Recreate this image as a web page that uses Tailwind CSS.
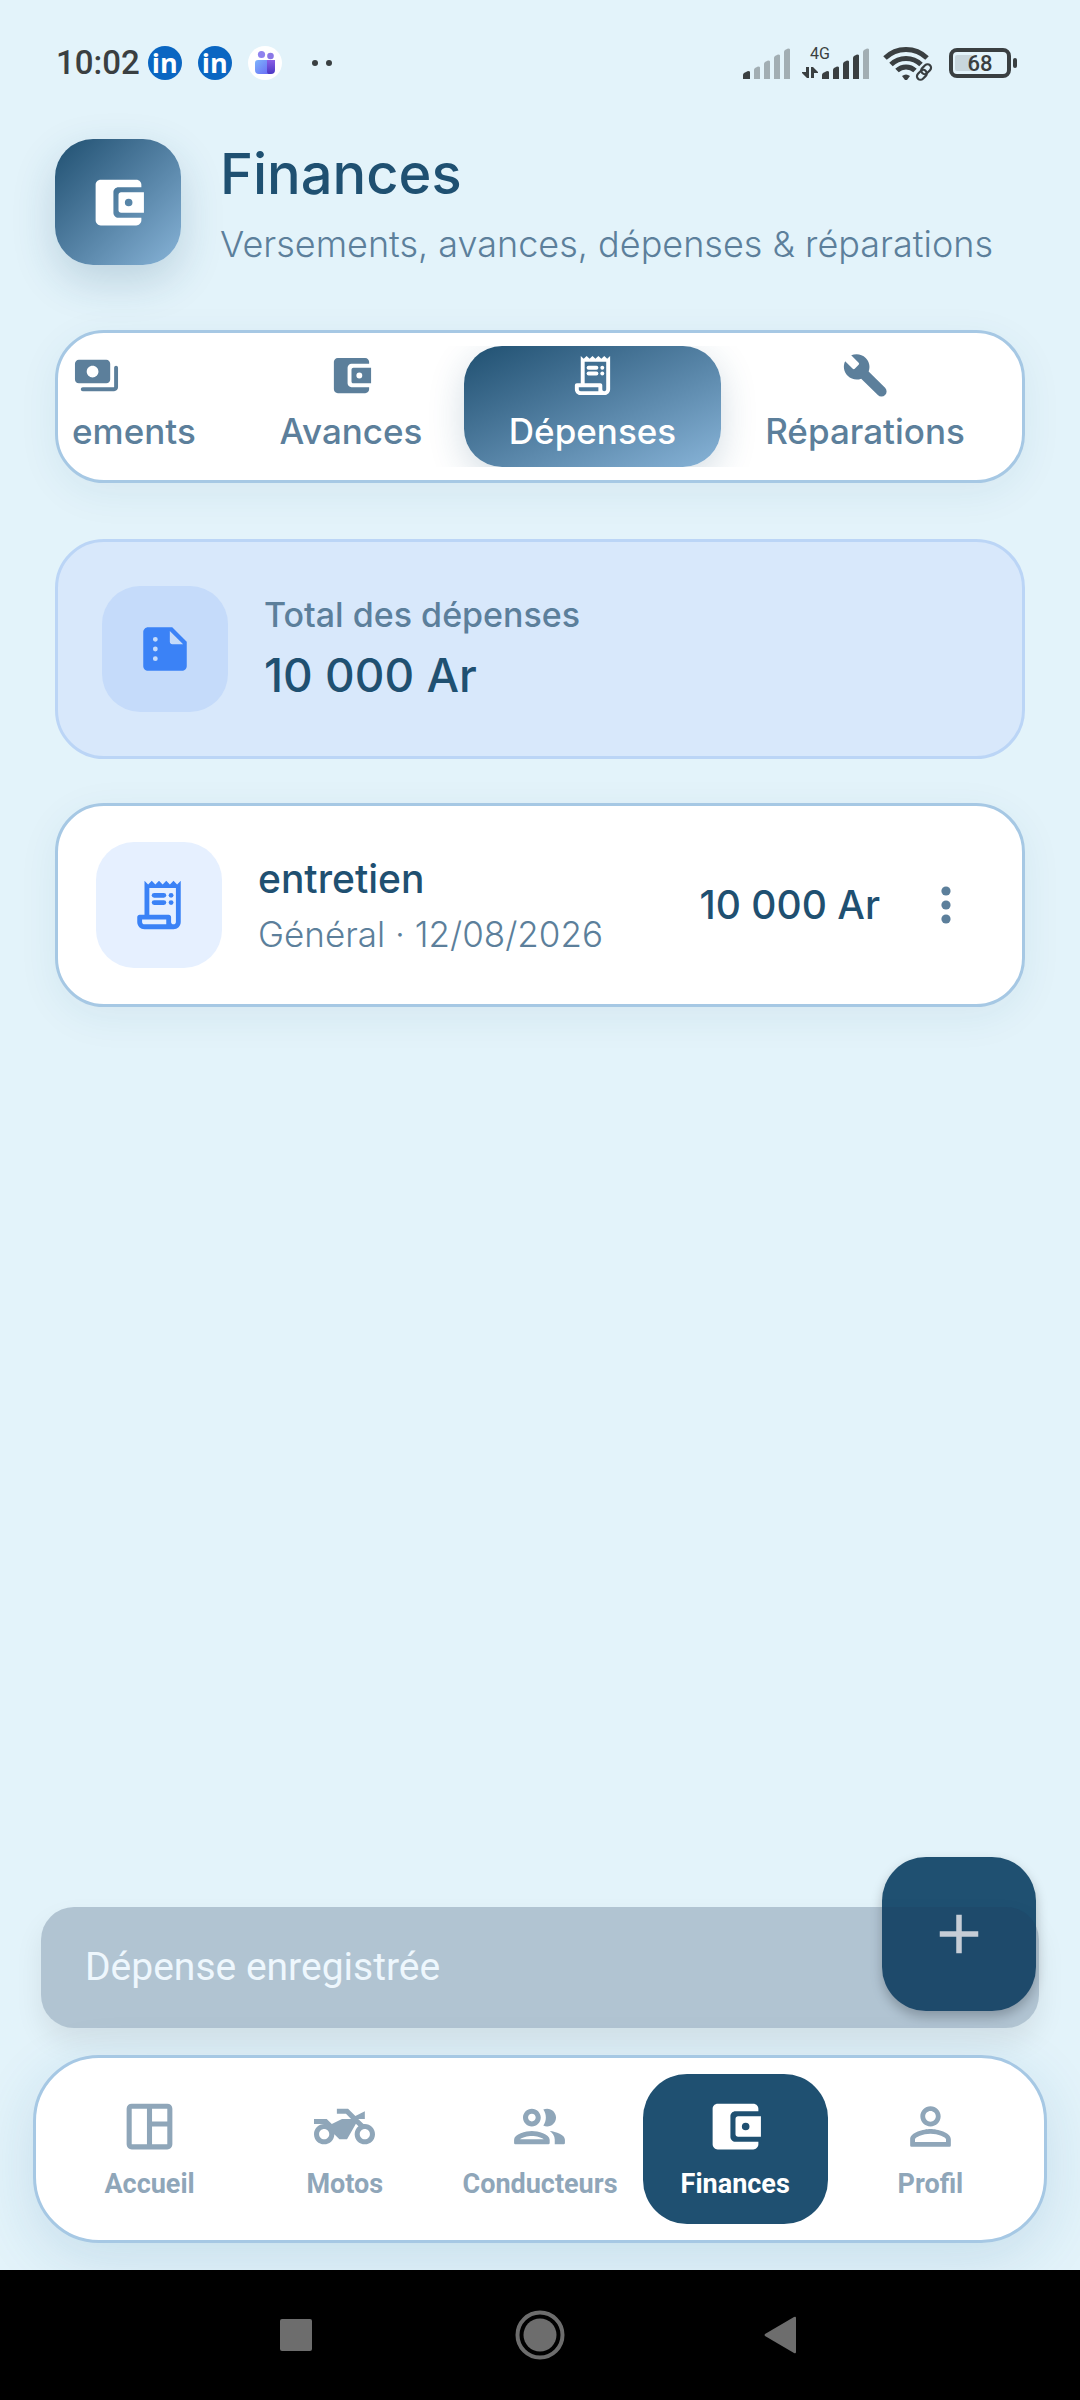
<!DOCTYPE html>
<html lang="fr">
<head>
    <meta charset="UTF-8">
    <meta name="viewport" content="width=device-width, initial-scale=1.0">
    <title>Finances</title>
    <script src="https://cdn.jsdelivr.net/npm/@tailwindcss/browser@4"></script>
</head>
<body class="bg-[#e3f3fa] font-[Inter,'Liberation_Sans',sans-serif]">
    <!-- Shared icons -->
    <svg class="hidden">
        <symbol id="wallet" viewBox="0 0 24 24">
            <path d="M21 18v1c0 1.1-.9 2-2 2H5c-1.11 0-2-.9-2-2V5c0-1.1.89-2 2-2h14c1.1 0 2 .9 2 2v1h-9c-1.11 0-2 .9-2 2v8c0 1.1.89 2 2 2h9z"/>
            <path fill-rule="evenodd" d="M22 8v8h-9c-.55 0-1-.45-1-1V9c0-.55.45-1 1-1h9zm-6 5.5a1.5 1.5 0 1 0 0-3 1.5 1.5 0 0 0 0 3z"/>
        </symbol>
        <symbol id="receipt" viewBox="0 0 24 24">
            <path d="M19.5 3.5 18 2l-1.5 1.5L15 2l-1.5 1.5L12 2l-1.5 1.5L9 2 7.5 3.5 6 2v14H4c-.55 0-1 .45-1 1v2c0 1.66 1.34 3 3 3h12c1.66 0 3-1.34 3-3V2l-1.5 1.5zM15 20H6c-.55 0-1-.45-1-1v-1h10v2zm4-1c0 .55-.45 1-1 1s-1-.45-1-1v-2c0-.55-.45-1-1-1H8V5h11v14z"/>
            <rect x="9" y="7" width="6" height="2" rx="1"/><circle cx="17" cy="8" r="1"/>
            <rect x="9" y="10" width="6" height="2" rx="1"/><circle cx="17" cy="11" r="1"/>
        </symbol>
    </svg>

    <div class="flex min-h-screen flex-col">
        <!-- Status bar -->
        <div class="flex h-[126px] items-center justify-between pl-14 pr-[61px] text-[#3a3f41] font-[Roboto,sans-serif]">
            <div class="flex items-center">
                <span class="mr-2 text-[33px] leading-10 font-medium">10:02</span>
                <span class="mr-4 flex size-[34px] items-center justify-center rounded-full bg-[#0a66c2] pb-[2px] font-['Open_Sans',sans-serif] text-[27px] leading-none font-bold text-white">in</span>
                <span class="mr-4 flex size-[34px] items-center justify-center rounded-full bg-[#0a66c2] pb-[2px] font-['Open_Sans',sans-serif] text-[27px] leading-none font-bold text-white">in</span>
                <svg class="mr-[30px] size-[34px]" viewBox="0 0 34 34">
                    <defs>
                        <linearGradient id="tl" x1="0" y1="0" x2="1" y2="1"><stop stop-color="#7db4fb"/><stop offset="1" stop-color="#6a6cf6"/></linearGradient>
                        <linearGradient id="tr" x1="0" y1="0" x2="0" y2="1"><stop stop-color="#8a5fe6"/><stop offset="1" stop-color="#4a38c4"/></linearGradient>
                    </defs>
                    <circle cx="17" cy="17" r="17" fill="#fff"/>
                    <circle cx="13.500" cy="8.500" r="3.600" fill="#8f83ee"/>
                    <circle cx="22.500" cy="10" r="3.300" fill="#8a78e6"/>
                    <path d="M17 14h10v10a4 4 0 0 1-4 4h-6z" fill="url(#tr)"/>
                    <path d="M10 14h9v11q0 3 2 3H11a4 4 0 0 1-4-4v-7a3 3 0 0 1 3-3z" fill="url(#tl)"/>
                </svg>
                <svg class="h-2 w-5" viewBox="0 0 20 8" fill="currentColor"><circle cx="3" cy="4" r="3"/><circle cx="17" cy="4" r="3"/></svg>
            </div>
            <div class="flex items-center">
                <!-- Signal, second signal with 4G -->
                <svg class="h-9 w-[130px] overflow-visible" viewBox="0 0 130 36" fill="currentColor">
                    <path d="M2 34v-4q0-1 1-2l4-2q2 0 2 1v7z"/>
                    <g opacity=".38">
                        <path d="M13 34v-9q0-1 1-2l3-1.500q2 0 2 1V34z"/>
                        <path d="M23 34V19q0-1 1-2l3-1.500q2 0 2 1V34z"/>
                        <path d="M33 34V13q0-1 1-2l3-1.500q2 0 2 1V34z"/>
                        <path d="M43 34V7q0-1 1-2l3-1.500q2 0 2 1V34z"/>
                        <path d="M122 34V7q0-1 1-2l3-1.500q2 0 2 1V34z"/>
                    </g>
                    <path d="M81 34v-4q0-1 1-2l4-2q2 0 2 1v7z"/>
                    <path d="M92 34v-9q0-1 1-2l3-1.500q2 0 2 1V34z"/>
                    <path d="M102 34V19q0-1 1-2l3-1.500q2 0 2 1V34z"/>
                    <path d="M112 34V13q0-1 1-2l3-1.500q2 0 2 1V34z"/>
                    <path d="M65 22h3v11h-2l-5-5v-1h4zM70 22h2l5 5v1h-4v5h-3z"/>
                    <text x="69" y="14" font-size="16">4G</text>
                </svg>
                <svg class="ml-3 h-9 w-[50px]" viewBox="0 0 50 36" fill="none" stroke="currentColor" stroke-width="5">
                    <path d="M2 13a30 30 0 0 1 42 0M8 19.500a21.500 21.500 0 0 1 30 0M14 25.500a13 13 0 0 1 18 0"/>
                    <path d="M19 31q4-3 8 0l-3 4h-2z" fill="currentColor" stroke="none"/>
                    <g stroke="#e3f3fa" stroke-width="7"><path d="M36 32l9-9"/></g>
                    <g stroke-width="2.200" transform="rotate(-45 41 27)"><rect x="32" y="24" width="11" height="7" rx="3.500"/><rect x="39" y="23" width="11" height="7" rx="3.500"/></g>
                </svg>
                <svg class="ml-4 h-9 w-[70px]" viewBox="0 0 70 36">
                    <rect x="2" y="5" width="58" height="26" rx="6" fill="none" stroke="currentColor" stroke-width="4"/>
                    <rect x="6" y="10" width="18" height="16" rx="2" fill="#c8d6dd"/>
                    <rect x="64" y="13" width="4" height="10" rx="2" fill="currentColor"/>
                    <text x="31" y="26" font-size="22" font-weight="500" text-anchor="middle" fill="currentColor">68</text>
                </svg>
            </div>
        </div>

        <!-- Header -->
        <header class="flex items-center gap-[39px] px-[55px] pt-[10px]">
            <div class="flex size-[126px] shrink-0 items-center justify-center rounded-[38px] bg-linear-to-br from-[#1f5071] to-[#88b4d8] text-white shadow-[0_16px_44px_rgba(31,80,113,0.2)]">
                <svg class="size-[61px]" fill="currentColor"><use href="#wallet"/></svg>
            </div>
            <div>
                <h1 class="text-[56px] leading-[76px] font-medium text-[#1f5071]">Finances</h1>
                <p class="pt-2 text-[36px] leading-[48px] font-light whitespace-nowrap text-[#5c7f9b]">Versements, avances, dépenses &amp; réparations</p>
            </div>
        </header>

        <main class="flex-1 px-[55px] pt-[62px]">
            <!-- Tabs -->
            <div class="rounded-[49px] border-3 border-[#a6c8e4] bg-white p-[13px] shadow-[0_10px_40px_rgba(31,80,113,0.07)]">
                <div class="flex h-[121px] justify-end overflow-hidden text-[35px] font-medium text-[#5c7f9b]" role="tablist">
                    <button class="flex w-[284px] shrink-0 flex-col items-center gap-2 pt-[6px]" role="tab">
                        <svg class="size-[47px]" viewBox="0 0 24 24" fill="currentColor"><path d="M19 14V6c0-1.100-.9-2-2-2H3c-1.100 0-2 .9-2 2v8c0 1.100.9 2 2 2h14c1.100 0 2-.9 2-2zm-9-1c-1.660 0-3-1.340-3-3s1.340-3 3-3 3 1.340 3 3-1.340 3-3 3zm13-5v10c0 1.100-.9 2-2 2H5c-.55 0-1-.45-1-1s.45-1 1-1h16V8c0-.55.45-1 1-1s1 .45 1 1z"/></svg>
                        <span class="leading-[48px]">Versements</span>
                    </button>
                    <button class="flex w-[226px] shrink-0 flex-col items-center gap-2 pt-[6px]" role="tab">
                        <svg class="size-[47px]" fill="currentColor"><use href="#wallet"/></svg>
                        <span class="leading-[48px]">Avances</span>
                    </button>
                    <button class="flex w-[257px] shrink-0 flex-col items-center gap-2 rounded-[38px] bg-linear-to-br from-[#1f5071] to-[#88b4d8] pt-[6px] text-white shadow-[0_10px_36px_rgba(31,80,113,0.2)]" role="tab" aria-selected="true">
                        <svg class="size-[47px]" fill="currentColor"><use href="#receipt"/></svg>
                        <span class="leading-[48px]">Dépenses</span>
                    </button>
                    <button class="flex w-[288px] shrink-0 flex-col items-center gap-2 pt-[6px]" role="tab">
                        <svg class="size-[47px]" viewBox="0 0 24 24" fill="currentColor"><path d="M13.600 9.900 22 18.300a2.600 2.600 0 0 1-3.700 3.700L9.800 13.600c-2.300.9-5 .4-6.900-1.500C.9 10.100.4 7.100 1.600 4.700L5.500 8.500q.5.500 1 0L8.500 6.500q.5-.5 0-1L4.700 1.700C7.100.6 10.100 1 12.100 3c1.900 1.900 2.400 4.600 1.500 6.900z"/></svg>
                        <span class="leading-[48px]">Réparations</span>
                    </button>
                </div>
            </div>

            <!-- Total -->
            <section class="mt-14 flex items-center gap-9 rounded-[49px] border-3 border-[#bbd5f6] bg-[#d8e8fb] px-11 py-11">
                <div class="flex size-[126px] items-center justify-center rounded-[38px] bg-[#c5dbfa] text-[#3b82f6]">
                    <svg class="size-[58px]" viewBox="0 0 24 24" fill="currentColor"><path fill-rule="evenodd" d="M15 3H5c-1.100 0-2 .9-2 2v14c0 1.100.9 2 2 2h14c1.100 0 2-.9 2-2V9l-6-6zM8 17a1 1 0 1 1 0-2 1 1 0 0 1 0 2zm0-4a1 1 0 1 1 0-2 1 1 0 0 1 0 2zm0-4a1 1 0 1 1 0-2 1 1 0 0 1 0 2zm6-4.500L19.500 10H15c-.55 0-1-.45-1-1z"/></svg>
                </div>
                <div class="pt-1">
                    <p class="text-[34px] leading-[48px] font-medium text-[#5c7f9b]">Total des dépenses</p>
                    <p class="text-[46px] leading-[72px] font-medium text-[#1f5071]">10 000 Ar</p>
                </div>
            </section>

            <!-- Expense -->
            <article class="mt-11 flex items-center gap-9 rounded-[49px] border-3 border-[#a6c8e4] bg-white py-9 pr-[62px] pl-[38px] shadow-[0_10px_40px_rgba(31,80,113,0.07)]">
                <div class="flex size-[126px] items-center justify-center rounded-[38px] bg-[#e6f0ff] text-[#3b82f6]">
                    <svg class="size-[58px]" fill="currentColor"><use href="#receipt"/></svg>
                </div>
                <div class="flex-1">
                    <h2 class="text-[39px] leading-[54px] font-medium text-[#1f5071]">entretien</h2>
                    <p class="pt-1 text-[35px] leading-[48px] font-light text-[#5c7f9b]">Général · 12/08/2026</p>
                </div>
                <span class="pr-4 text-[39px] leading-[48px] font-medium text-[#1f5071]">10 000 Ar</span>
                <button class="text-[#5c7f9b]" aria-label="Options">
                    <svg class="mx-2 h-11 w-3" viewBox="0 0 12 44" fill="currentColor"><circle cx="6" cy="8" r="4.600"/><circle cx="6" cy="22" r="4.600"/><circle cx="6" cy="36" r="4.600"/></svg>
                </button>
            </article>
        </main>

        <div class="relative font-[Roboto,sans-serif]">
            <button class="absolute -top-[50px] right-11 flex size-[154px] items-center justify-center rounded-[44px] bg-[#1f5071] text-white shadow-[0_6px_12px_rgba(0,0,0,0.25)]" aria-label="Ajouter">
                <svg class="size-[66px]" viewBox="0 0 24 24" fill="currentColor"><path d="M19 13h-6v6h-2v-6H5v-2h6V5h2v6h6z"/></svg>
            </button>

            <!-- Snackbar, fading out over the button -->
            <div class="relative mx-[41px] flex h-[121px] items-center rounded-[33px] bg-[#1a385a]/25 px-11 text-[39px] text-[#eef7fd] shadow-[0_14px_28px_rgba(0,0,0,0.08)]" role="status">Dépense enregistrée</div>

            <nav class="relative mx-[33px] mt-[27px] mb-[27px] grid grid-cols-5 rounded-[66px] border-3 border-[#a6c8e4] bg-white p-4 text-[27px] leading-8 font-bold text-[#8fa6b9] shadow-[0_16px_60px_rgba(31,100,150,0.14)]">
                <a href="#" class="mx-[5px] flex h-[150px] flex-col items-center gap-[11px] pt-[22px]">
                    <svg class="size-[61px]" viewBox="0 0 24 24" fill="currentColor"><path fill-rule="evenodd" d="M5 3h14a2 2 0 0 1 2 2v14a2 2 0 0 1-2 2H5a2 2 0 0 1-2-2V5a2 2 0 0 1 2-2zm0 2v14h6V5zm8 0v5h6V5zm0 7v7h6v-7z"/></svg>
                    Accueil
                </a>
                <a href="#" class="mx-[5px] flex h-[150px] flex-col items-center gap-[11px] pt-[22px]">
                    <svg class="size-[61px]" viewBox="0 0 24 24" fill="currentColor"><path d="M20 11c-.18 0-.36.030-.53.050L17.410 9H20V6l-3.720 1.860L13.410 5H9v2h3.590l2 2H11l-4 2-2-2H0v2h4c-2.210 0-4 1.790-4 4s1.790 4 4 4 4-1.790 4-4l2 2h3l3.490-6.100 1.010 1.010c-.91.73-1.500 1.840-1.500 3.090 0 2.210 1.790 4 4 4s4-1.790 4-4-1.790-4-4-4zM4 17c-1.100 0-2-.9-2-2s.9-2 2-2 2 .9 2 2-.9 2-2 2zm16 0c-1.100 0-2-.9-2-2s.9-2 2-2 2 .9 2 2-.9 2-2 2z"/></svg>
                    Motos
                </a>
                <a href="#" class="mx-[5px] flex h-[150px] flex-col items-center gap-[11px] pt-[22px]">
                    <svg class="size-[61px]" viewBox="0 0 24 24" fill="currentColor"><path d="M9 13.750c-2.340 0-7 1.170-7 3.500V18.500q0 .5.5.5H15.500q.5 0 .5-.5v-1.250c0-2.330-4.660-3.500-7-3.500zM4.340 17c.84-.58 2.870-1.250 4.660-1.250s3.820.67 4.660 1.250H4.340zM9 12c1.930 0 3.500-1.570 3.500-3.500S10.930 5 9 5 5.500 6.570 5.500 8.500 7.070 12 9 12zm0-5c.83 0 1.500.67 1.500 1.500S9.830 10 9 10s-1.500-.67-1.500-1.500S8.170 7 9 7zm7.040 6.810c1.160.84 1.960 1.960 1.960 3.440V19h3.500q.5 0 .5-.5v-1.250c0-2.020-3.500-3.170-5.960-3.440zM15 12c1.930 0 3.500-1.570 3.500-3.500S16.930 5 15 5c-.54 0-1.040.13-1.500.35.63.89 1 1.980 1 3.150s-.37 2.260-1 3.150c.46.22.96.35 1.500.35z"/></svg>
                    Conducteurs
                </a>
                <a href="#" class="mx-[5px] flex h-[150px] flex-col items-center gap-[11px] rounded-[44px] bg-[#1f5071] pt-[22px] text-white" aria-current="page">
                    <svg class="size-[61px]" fill="currentColor"><use href="#wallet"/></svg>
                    Finances
                </a>
                <a href="#" class="mx-[5px] flex h-[150px] flex-col items-center gap-[11px] pt-[22px]">
                    <svg class="size-[61px]" viewBox="0 0 24 24" fill="currentColor"><path d="M12 5.900c1.160 0 2.100.94 2.100 2.100s-.94 2.100-2.100 2.100S9.900 9.160 9.900 8s.94-2.100 2.100-2.100m0 9c2.970 0 6.100 1.460 6.100 2.100v1.100H5.900V17c0-.64 3.130-2.100 6.100-2.100M12 4C9.790 4 8 5.790 8 8s1.790 4 4 4 4-1.790 4-4-1.790-4-4-4zm0 9c-2.670 0-8 1.340-8 4v2.500q0 .5.5.5h15q.5 0 .5-.5V17c0-2.660-5.330-4-8-4z"/></svg>
                    Profil
                </a>
            </nav>
        </div>

        <!-- System buttons -->
        <div class="relative flex h-[130px] items-center justify-center gap-[193px] bg-black text-[#6d6d6d]">
            <button aria-label="Récents"><svg class="size-[50px]" viewBox="0 0 50 50" fill="currentColor"><rect x="8" y="9" width="32" height="32" rx="2"/></svg></button>
            <button aria-label="Accueil"><svg class="size-[50px]" viewBox="0 0 50 50" fill="currentColor"><circle cx="25" cy="25" r="16.500"/><circle cx="25" cy="25" r="22.500" fill="none" stroke="currentColor" stroke-width="4"/></svg></button>
            <button aria-label="Retour"><svg class="size-[50px]" viewBox="0 0 50 50" fill="currentColor"><path d="M36 7q2-1 2 1v34q0 2-2 1L7 26q-1-1 0-2z"/></svg></button>
        </div>
    </div>
</body>
</html>
